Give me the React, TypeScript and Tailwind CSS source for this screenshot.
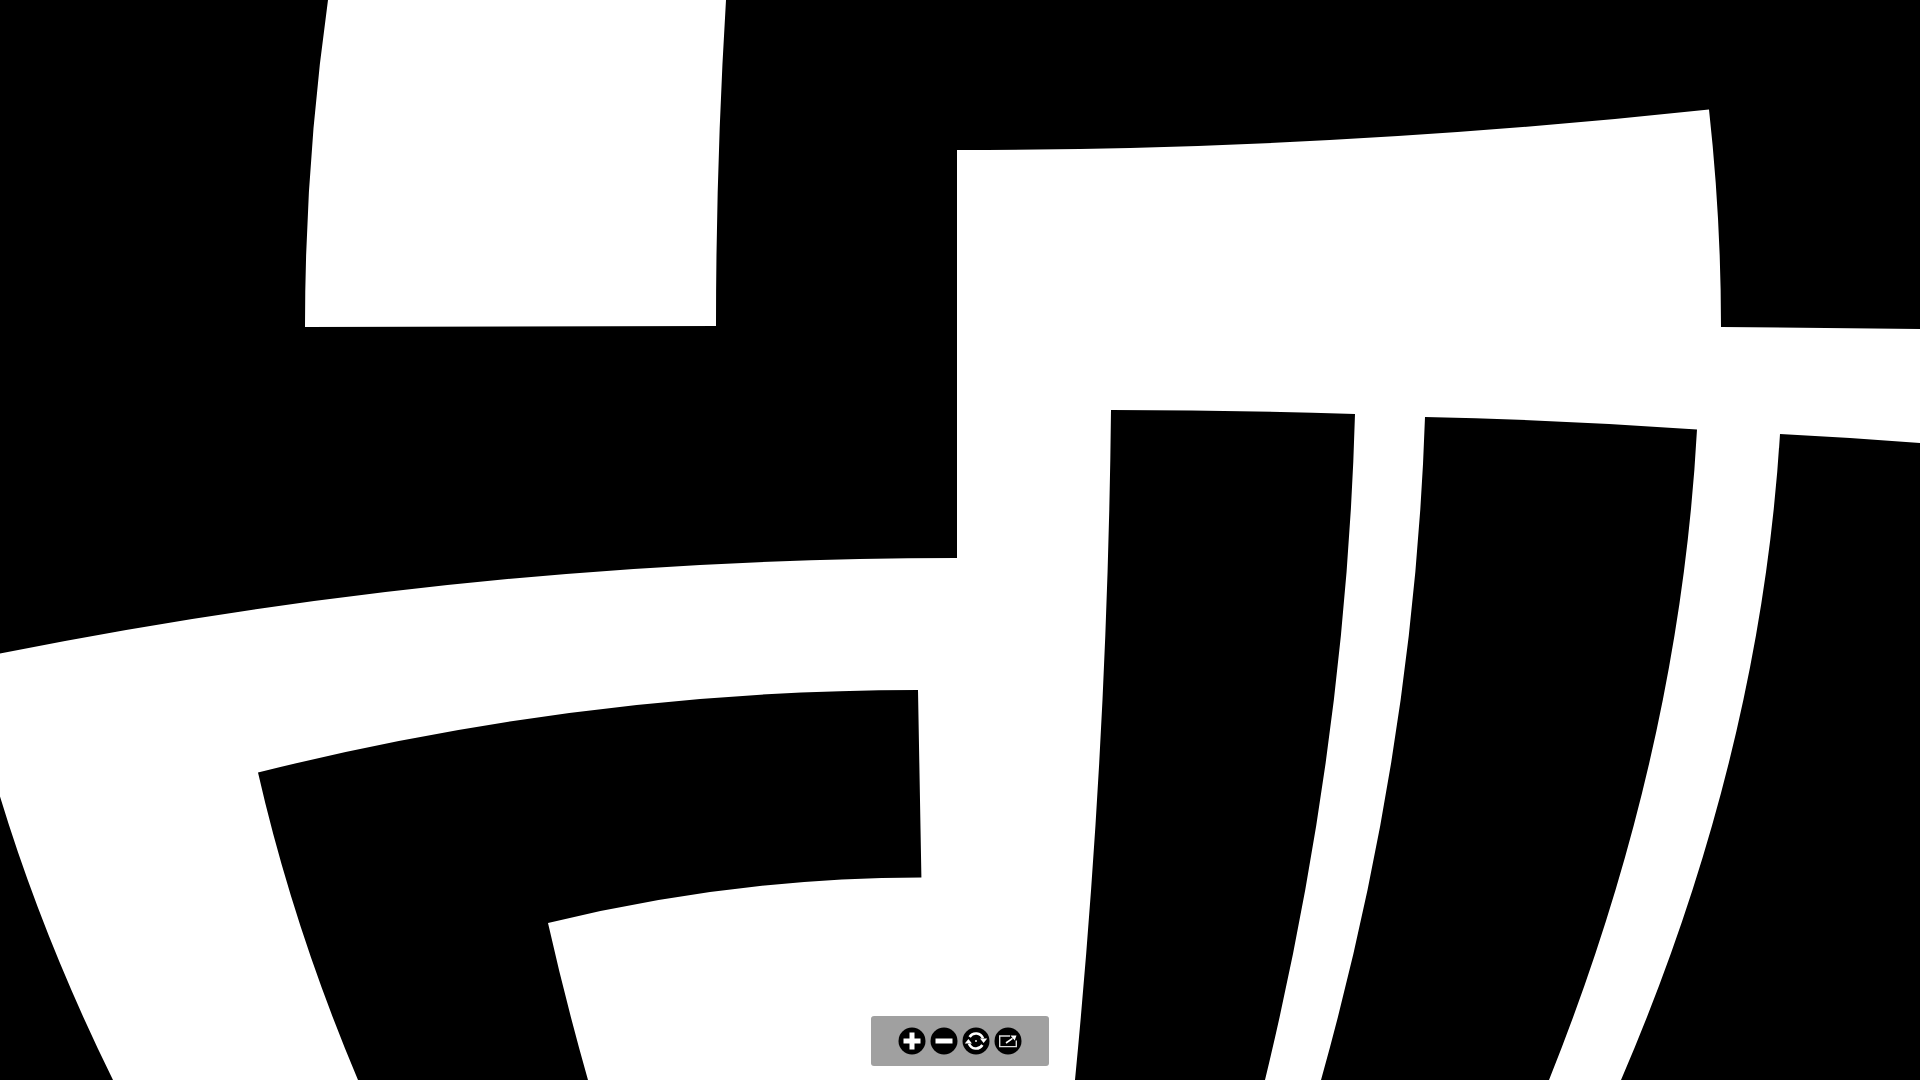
// outlines traced off the reference; every curved edge is one quadratic
const topBlock = 'M328 0 L726 0 Q716 163 716 326 L305 327 Q305 163.5 328 0 Z';

const mainBlock =
  'M957 150 Q1333 150 1709 109.5 Q1721 218 1721 327 L1920 329 L1920 1080 L113 1080 ' +
  'Q43 938 0 796.6 L0 653.6 Q478.5 558 957 558 Z';

const hook =
  'M258 772.5 Q588 690 918 690 L921.4 877.5 Q734.7 877.5 548 923 Q565.7 1001.5 588 1080 ' +
  'L358 1080 Q293 926 258 772.5 Z';

const bar1 = 'M1111 410 Q1233 410 1355 414 Q1345.7 747 1265 1080 L1075 1080 Q1107.4 745 1111 410 Z';
const bar2 = 'M1425 417 Q1561 420 1697 429.5 Q1679.3 754.75 1549 1080 L1321 1080 Q1413.9 748.5 1425 417 Z';
const bar3 = 'M1780 434 Q1850 437.5 1920 443 L1920 1080 L1621 1080 Q1760 757 1780 434 Z';

function IconButton({ children }: { children: React.ReactNode }) {
  return (
    <svg viewBox="0 0 28 28" className="w-7 h-7 block">
      <circle cx="14" cy="14" r="13.5" fill="#000" />
      {children}
    </svg>
  );
}

export default function App() {
  return (
    <div className="relative w-screen h-screen overflow-hidden bg-black">
      <svg viewBox="0 0 1920 1080" className="absolute inset-0 w-full h-full block">
        <path d={topBlock} fill="#fff" />
        <path d={mainBlock} fill="#fff" />
        <path d={hook} fill="#000" />
        <path d={bar1} fill="#000" />
        <path d={bar2} fill="#000" />
        <path d={bar3} fill="#000" />
      </svg>

      {/* viewer toolbar */}
      <div className="absolute left-1/2 -translate-x-1/2 bottom-[14px] w-[178px] h-[50px] flex items-center justify-center gap-1 rounded-[3px] bg-[#a0a0a0]">
        <IconButton>
          <path d="M5.5 14h17M14 5.5v17" stroke="#fff" strokeWidth="5" fill="none" />
        </IconButton>
        <IconButton>
          <path d="M5.5 14h17" stroke="#fff" strokeWidth="5" fill="none" />
        </IconButton>
        <IconButton>
          <path d="M7.6 10A7.5 7.5 0 0 1 21 11.4" stroke="#fff" strokeWidth="2.6" fill="none" />
          <path d="M20.4 18A7.5 7.5 0 0 1 7 16.6" stroke="#fff" strokeWidth="2.6" fill="none" />
          <path d="M18 11.5h7.2l-3.6 4.6z" fill="#fff" />
          <path d="M2.8 16.5H10l-3.6-4.6z" fill="#fff" />
          <circle cx="14" cy="14" r="0.9" fill="#fff" />
        </IconButton>
        <IconButton>
          <path d="M16 9H5.7v10.6h16.6V13.5" stroke="#ddd" strokeWidth="1.4" fill="none" />
          <path d="M12 16l6.5-4.6" stroke="#fff" strokeWidth="1.6" fill="none" />
          <path d="M16.5 8.6h6l-1.8 5z" fill="#fff" />
        </IconButton>
      </div>
    </div>
  );
}
